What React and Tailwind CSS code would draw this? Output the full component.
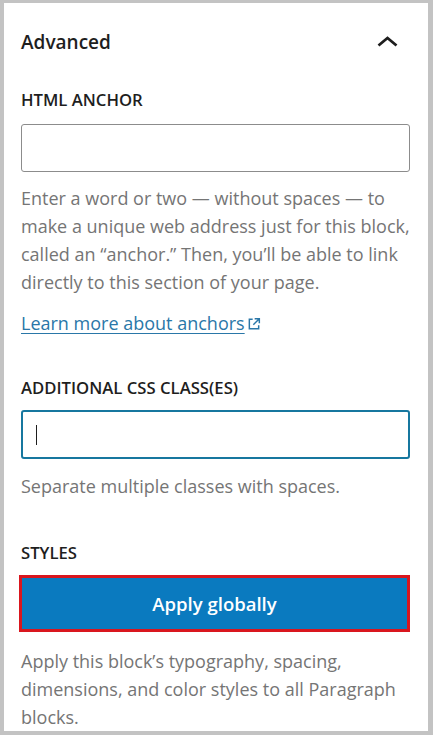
export default function App() {
  const font = { fontFamily: '"Open Sans", "Noto Sans", sans-serif' };
  return (
    <div className="h-[735px] w-[433px] bg-[#c3c3c3] pl-[4px] pt-[3px] pr-[5px] pb-[4px]" style={font}>
      <div className="h-full w-full overflow-hidden bg-white pl-[17px] pr-[18px]">
        <div className="flex items-center justify-between pt-[27px]">
          <h2 className="text-[19px] leading-[24px] font-semibold text-[#1e1e1e]">Advanced</h2>
          <svg width="21" height="11" viewBox="0 0 21 11" className="mr-[12px] -mt-[2px]" fill="none">
            <path d="M1.5 9.5 L10.5 2 L19.5 9.5" stroke="#1e1e1e" strokeWidth="2.8" />
          </svg>
        </div>

        <div className="mt-[36px] text-[16.7px] leading-[20px] font-semibold uppercase text-[#1e1e1e]">HTML Anchor</div>
        <div className="mt-[14px] h-[48px] w-full rounded-[3px] border border-[#8c8c8c]"></div>
        <p className="mt-[12px] text-[18px] leading-[28px] text-[#757575]">
          Enter a word or two — without spaces — to make a unique web address just for this block, called an “anchor.” Then, you’ll be able to link directly to this section of your page.
        </p>
        <div className="mt-[13px] flex items-center text-[18px] leading-[28px] text-[#2a77a8]">
          <span className="underline underline-offset-[3px]">Learn more about anchors</span>
          <svg width="16" height="16" viewBox="0 0 24 24" fill="none" className="ml-[1px] mt-[2px]">
            <path d="M19 14v5H5V5h5" stroke="#2a77a8" strokeWidth="2.2" />
            <path d="M13 4h7v7M20 4l-9 9" stroke="#2a77a8" strokeWidth="2.2" />
          </svg>
        </div>

        <div className="mt-[41px] text-[16.7px] leading-[20px] font-semibold uppercase text-[#1e1e1e]">Additional CSS class(es)</div>
        <div className="mt-[12px] flex h-[49px] w-full items-center rounded-[3px] border-2 border-[#17779f] pl-[13px]">
          <div className="h-[20px] w-[1px] bg-[#1e1e1e]"></div>
        </div>
        <p className="mt-[13px] text-[18px] leading-[28px] text-[#757575]">Separate multiple classes with spaces.</p>

        <div className="mt-[43px] text-[16.7px] leading-[20px] font-semibold uppercase text-[#1e1e1e]">Styles</div>
        <div className="mt-[12px] -ml-[2px] w-[391px] border-[3px] border-[#d9161e] bg-[#0a7abf]">
          <div className="flex h-[51px] items-center justify-center text-[18.5px] font-semibold text-white">Apply globally</div>
        </div>
        <p className="mt-[15px] text-[18px] leading-[28px] text-[#757575]">
          Apply this block’s typography, spacing, dimensions, and color styles to all Paragraph blocks.
        </p>
      </div>
    </div>
  );
}
